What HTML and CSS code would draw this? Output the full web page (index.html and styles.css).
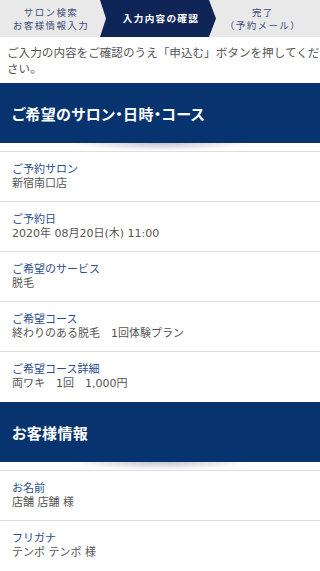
FILE: index.html
```html
<!DOCTYPE html>
<html lang="ja">
<head>
<meta charset="utf-8">
<title>入力内容の確認</title>
<link rel="stylesheet" href="styles.css">
</head>
<body>
<div class="steps">
  <div class="step step-prev">サロン検索<br>お客様情報入力</div>
  <div class="step step-current">入力内容の確認</div>
  <div class="step step-next">完了<br>（予約メール）</div>
</div>
<p class="intro">ご入力の内容をご確認のうえ「申込む」ボタンを押してください。</p>

<section class="section">
  <h2 class="section-title">ご希望のサロン・日時・コース</h2>
  <div class="rows">
    <div class="row"><div class="label">ご予約サロン</div><div class="value">新宿南口店</div></div>
    <div class="row"><div class="label">ご予約日</div><div class="value">2020年 08月20日(木) 11:00</div></div>
    <div class="row"><div class="label">ご希望のサービス</div><div class="value">脱毛</div></div>
    <div class="row"><div class="label">ご希望コース</div><div class="value">終わりのある脱毛　1回体験プラン</div></div>
    <div class="row"><div class="label">ご希望コース詳細</div><div class="value">両ワキ　1回　1,000円</div></div>
  </div>
</section>

<section class="section">
  <h2 class="section-title">お客様情報</h2>
  <div class="rows">
    <div class="row"><div class="label">お名前</div><div class="value">店舗 店舗 様</div></div>
    <div class="row"><div class="label">フリガナ</div><div class="value">テンポ テンポ 様</div></div>
  </div>
</section>
</body>
</html>
```

FILE: styles.css
```css
html, body {
  margin: 0;
  padding: 0;
  background: #fff;
}
body {
  font-family: "Noto Sans CJK JP", "Noto Sans", sans-serif;
  color: #555;
}
.steps {
  display: grid;
  grid-template-columns: 100px 116px 1fr;
  height: 37px;
  background: #e9e9e9;
}
.step {
  display: flex;
  align-items: center;
  justify-content: center;
  text-align: center;
  font-size: 9.5px;
  line-height: 12.5px;
  letter-spacing: 1.4px;
  color: #3d4f78;
}
.step-prev {
  padding-left: 2px;
}
.step-current {
  background: #0f2557;
  color: #fff;
  font-weight: bold;
  font-size: 9.6px;
  letter-spacing: 1.3px;
  padding-left: 6px;
  clip-path: polygon(0 0, 109px 0, 116px 50%, 109px 100%, 0 100%, 6px 50%);
}
.step-next {
  padding-right: 10px;
}
.intro {
  margin: 7px 0 0;
  padding: 0 0 0 7px;
  font-size: 11.6px;
  line-height: 16px;
  color: #555;
}
.section {
  margin-top: 7px;
}
.section + .section {
  margin-top: 1px;
}
.section-title {
  position: relative;
  margin: 0 0 8px;
  height: 60px;
  display: flex;
  align-items: center;
  padding-left: 12px;
  background: #07336f;
  color: #fff;
  font-size: 15px;
  font-weight: bold;
  letter-spacing: 0.3px;
  font-feature-settings: "palt";
}
.section-title::after {
  content: "";
  position: absolute;
  top: 100%;
  left: 22%;
  right: 22%;
  height: 8px;
  background: radial-gradient(ellipse 50% 100% at 50% 0, rgba(40, 50, 80, 0.28), rgba(40, 50, 80, 0) 100%);
}
.row {
  box-sizing: border-box;
  height: 50px;
  border-top: 1px solid #dcdcdc;
  padding: 9px 12px 0;
  font-size: 11px;
  line-height: 15px;
}
.label {
  color: #2c4d8c;
}
.value {
  font-family: "DejaVu Sans", "Noto Sans CJK JP", sans-serif;
  color: #555;
}
```
